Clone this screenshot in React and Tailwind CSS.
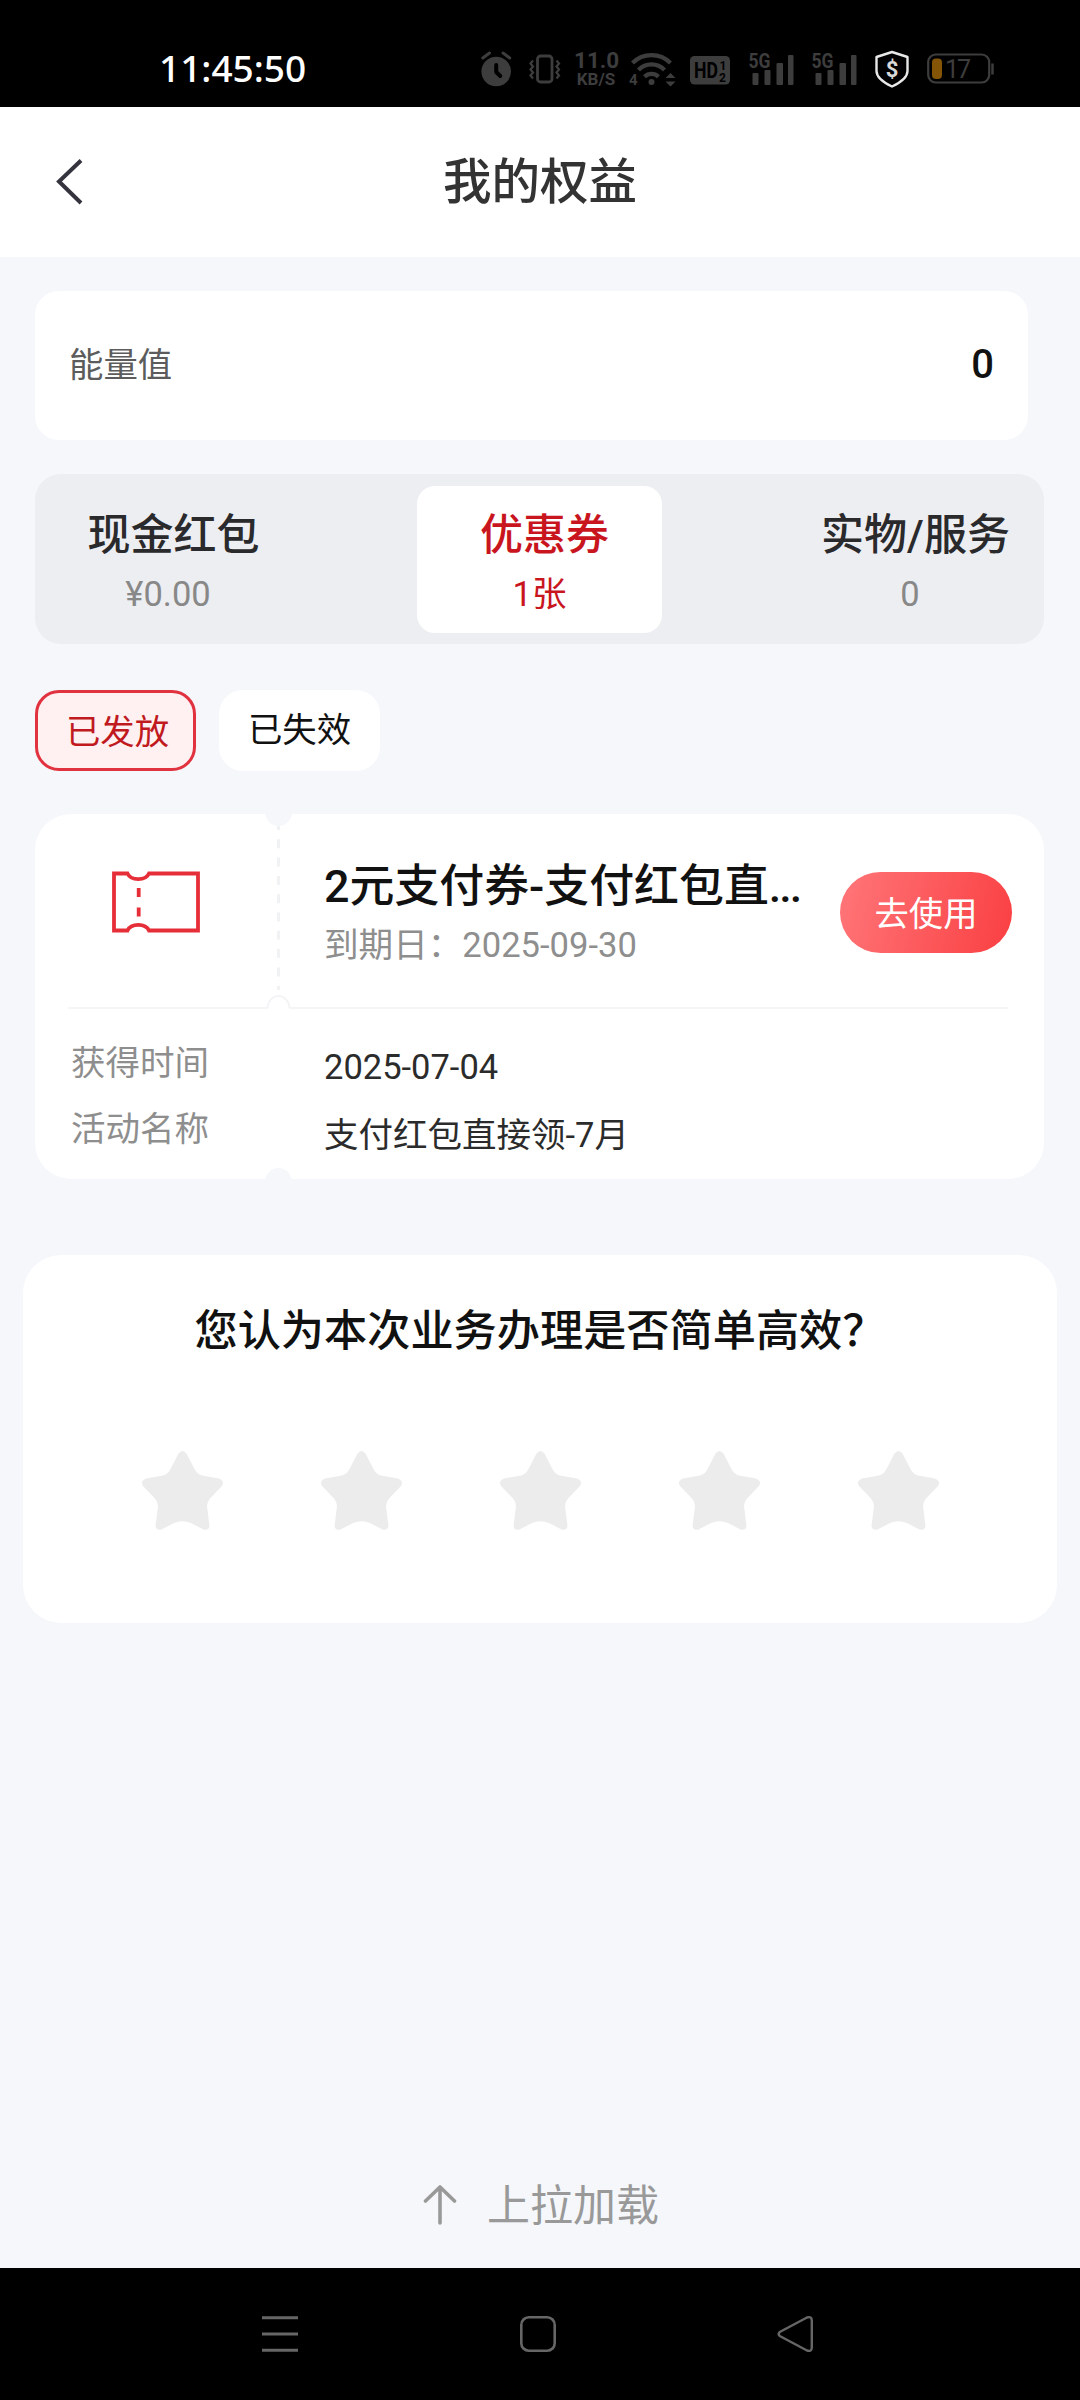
const DIM = "#3d3d3d";

function AlarmIcon() {
  return (
    <svg className="ml-[481px] h-[36px] w-[31px]" viewBox="0 0 31 36">
      <circle cx="15.2" cy="20.5" r="14.8" fill={DIM} />
      <path d="M1.8 7 8.500 2M28.700 7 22 2" stroke={DIM} strokeWidth="3" strokeLinecap="round" />
      <path d="M15.200 14v7l4 4" fill="none" stroke="#000" strokeWidth="4" strokeLinecap="round" strokeLinejoin="round" />
    </svg>
  );
}

function VibrateIcon() {
  return (
    <svg className="ml-[17px] h-[36px] w-[32px]" viewBox="0 0 32 36" fill="none" stroke={DIM} strokeWidth="2.800">
      <rect x="8.500" y="5" width="14.500" height="26" rx="3" />
      <path d="M4 9.500 1.500 12.500 4 15.500 1.500 18.500 4 21.500 1.500 24.500 4 27.500M27.500 9.500l2.500 3-2.500 3 2.500 3-2.500 3 2.500 3-2.500 3" strokeWidth="2.200" />
    </svg>
  );
}

function WifiIcon() {
  return (
    <svg className="ml-[11px] h-[36px] w-[48px] overflow-visible" viewBox="0 0 48 36" fill="none" stroke={DIM} strokeWidth="4.200">
      <path d="M3.500 12a27 27 0 0 1 38 0" />
      <path d="M9.500 19a18 18 0 0 1 26 0" />
      <path d="M15.500 25.700a10 10 0 0 1 14 0" />
      <circle cx="22.500" cy="31" r="3" fill={DIM} stroke="none" />
      <path d="M41.500 22l5 5h-10zM41.500 35.500l5-5h-10z" fill={DIM} stroke="none" />
      <text x="0" y="34" fontSize="15" fontWeight="700" fill={DIM} stroke="none">4</text>
    </svg>
  );
}

function HdIcon() {
  return (
    <svg className="ml-[13px] h-[36px] w-[40px] overflow-visible" viewBox="0 0 40 36">
      <rect y="5" width="40" height="28.500" rx="4.500" fill={DIM} />
      <g fill="#000" fontWeight="700">
        <text x="4" y="27" fontSize="22" textLength="24" lengthAdjust="spacingAndGlyphs">HD</text>
        <text x="29.500" y="18.500" fontSize="12">1</text>
        <text x="29" y="30.500" fontSize="12">2</text>
      </g>
    </svg>
  );
}

function SignalIcon() {
  return (
    <svg className="ml-[17px] h-[36px] w-[46px] overflow-visible" viewBox="0 0 46 36" fill={DIM}>
      <text x="1.500" y="17" fontSize="20" fontWeight="700" textLength="22" lengthAdjust="spacingAndGlyphs">5G</text>
      <rect x="5.500" y="22" width="6" height="12" rx="1" />
      <rect x="17.500" y="19" width="6" height="15" rx="1" />
      <rect x="29.500" y="12" width="6.500" height="22" rx="1" />
      <rect x="41" y="4" width="5.500" height="30" rx="1" />
    </svg>
  );
}

function ShieldIcon() {
  return (
    <svg className="ml-[19px] h-[38px] w-[34px]" viewBox="0 0 34 38" fill="none">
      <path d="M17 2 32.500 7v14c0 7-7 11.500-15.500 15.500C8.500 32.500 1.500 28 1.500 21V7z" stroke="#e8e8e8" strokeWidth="2.400" strokeLinejoin="round" />
      <text x="17" y="26.500" fontSize="22" fontWeight="700" textAnchor="middle" fill="#d8d8d8">$</text>
    </svg>
  );
}

function BatteryIcon() {
  return (
    <svg className="ml-[18px] h-[36px] w-[68px]" viewBox="0 0 68 36" fill="none">
      <rect x="1.200" y="3.500" width="61" height="28" rx="7.500" stroke="#3d3d3d" strokeWidth="2.200" />
      <rect x="5" y="7.500" width="10" height="20.500" rx="4" fill="#845407" />
      <path d="M65.500 12.500v11" stroke="#3d3d3d" strokeWidth="2.500" />
      <text x="18" y="26.500" fontSize="25" fill="#3d3d3d" textLength="26">17</text>
    </svg>
  );
}

function StatusBar() {
  return (
    <div className="relative flex h-[107px] items-center bg-black pt-[31px]">
      <span className="absolute left-[159px] top-[44px] font-['Noto_Sans','Roboto',sans-serif] text-[37px] font-medium leading-[48px] text-white">
        11:45:50
      </span>
      <AlarmIcon />
      <VibrateIcon />
      <div className="ml-[13px] w-[44px] text-center font-bold text-[#3d3d3d]">
        <div className="text-[22.500px] leading-[20px]">11.0</div>
        <div className="text-[17px] leading-[18px]">KB/S</div>
      </div>
      <WifiIcon />
      <HdIcon />
      <SignalIcon />
      <SignalIcon />
      <ShieldIcon />
      <BatteryIcon />
    </div>
  );
}

function Header() {
  return (
    <header className="grid h-[150px] grid-cols-[200px_1fr_200px] items-center bg-white">
      <svg className="ml-[54px] h-[48px] w-[32px]" viewBox="0 0 32 48" fill="none" stroke="#34343e" strokeWidth="4">
        <path d="M27 2.500 5 23.500 27 45" />
      </svg>
      <h1 className="pt-[2px] text-center text-[48.5px] font-medium leading-[60px] text-[#333]">我的权益</h1>
    </header>
  );
}

const tabs = [
  { label: "现金红包", value: "¥0.00" },
  { label: "优惠券", value: "1张", active: true },
  { label: "实物/服务", value: "0" },
];

function Tabs() {
  return (
    <nav className="mt-[34px] flex h-[170px] w-[1009px] rounded-[26px] bg-[#edeef2] pl-[11px] pt-[12px]">
      {tabs.map((t) => (
        <div
          key={t.label}
          className={
            t.active
              ? "ml-[116px] mr-[126px] flex h-[147px] w-[245px] flex-col items-center rounded-[18px] bg-white pl-[10px] pt-[19px] text-[#c9151e]"
              : "flex h-[147px] w-[255px] flex-col items-center pt-[19px] text-[#2a2a2c]"
          }
        >
          <span className="text-[43px] font-medium leading-[60px]">{t.label}</span>
          <span
            className={
              t.active
                ? "mr-[10px] text-[34.5px] leading-[58px]"
                : "mr-[11px] text-[34.5px] leading-[58px] text-[#888]"
            }
          >
            {t.value}
          </span>
        </div>
      ))}
    </nav>
  );
}

function TicketIcon() {
  return (
    <svg className="ml-[76px] mt-[57px] h-[62px] w-[89px]" viewBox="0 0 89 62" fill="none" stroke="#e62e38" strokeWidth="3.800">
      <path d="M3 2.500H16.500c3.500 7.500 18 7.500 21.500 0H87v57H38c-3.500-7.500-18-7.500-21.500 0H3z" />
      <path d="M27.700 17v9M27.700 36.500v9" />
    </svg>
  );
}

function Coupon() {
  return (
    <section className="relative mt-[43px] h-[365px] w-[1009px] overflow-hidden rounded-[36px] bg-white">
      <i className="absolute left-[230px] top-[-15px] h-[27px] w-[27px] rounded-full bg-[#f5f7fb]" />
      <i className="absolute bottom-[-16px] left-[230px] h-[27px] w-[27px] rounded-full bg-[#f5f7fb]" />
      <svg className="absolute left-[242px] top-[12px] h-[164px] w-[3px]" viewBox="0 0 3 164">
        <path d="M1.500 0V164" stroke="#f1f2f4" strokeWidth="3" strokeDasharray="9 9.300" strokeDashoffset="5" />
      </svg>
      <svg className="absolute left-[231px] top-[180px] h-[15px] w-[25px]" viewBox="0 0 25 15" fill="none" stroke="#f3f4f6" strokeWidth="1.800">
        <path d="M1.500 14.500a11 12.500 0 0 1 22 0" />
      </svg>
      <div className="flex h-[193px]">
        <div className="w-[208px]">
          <TicketIcon />
        </div>
        <div className="ml-[81px] w-[482px] pt-[43px]">
          <h2 className="whitespace-nowrap text-[44.9px] font-medium leading-[60px] text-[#111]">
            2元支付券-支付红包直<span className="tracking-[-2px]">...</span>
          </h2>
          <p className="text-[34.6px] leading-[57px] text-[#8e8e8e]">到期日：2025-09-30</p>
        </div>
        <button className="ml-[34px] mt-[58px] h-[81px] w-[172px] rounded-full bg-linear-[105deg,#ff7679,#fa3f42] pt-[4px] text-[34.3px] leading-[77px] text-white">
          去使用
        </button>
      </div>
      <div className="ml-[33px] flex h-[2px] w-[940px] justify-between">
        <i className="w-[200px] bg-[#f5f5f6]" />
        <i className="w-[718px] bg-[#f5f5f6]" />
      </div>
      <dl className="grid grid-cols-[253px_1fr] pl-[36px] text-[34.5px] leading-[66px]">
        <dt className="pt-[21px] text-[#8e8e8e]">获得时间</dt>
        <dd className="pt-[25px] text-[#2b2b2b]">2025-07-04</dd>
        <dt className="relative top-[-4px] text-[#8e8e8e]">活动名称</dt>
        <dd className="relative top-[2px] text-[#2b2b2b]">支付红包直接领-7月</dd>
      </dl>
    </section>
  );
}

function Star() {
  return (
    <svg className="h-[81px] w-[83px]" viewBox="0 0 83 81" fill="#ececec">
      <path d="M37.500 3.500Q41.500-1.500 45.500 3.500L53.500 19Q56 24 61 25.500L78 28.500Q84 31 81 36L69 48.500Q66 52 66 56L68.500 76Q67.500 81 62.500 79.500L50 73Q41.500 69.500 33 73L20.500 79.500Q15.500 81 14.500 76L17 56Q17 52 14 48.500L2 36Q-1 31 5 28.500L22 25.500Q27 24 29.500 19Z" />
    </svg>
  );
}

function Survey() {
  return (
    <section className="ml-[-12px] mt-[76px] h-[368px] w-[1034px] rounded-[38px] bg-white pt-[47px]">
      <h2 className="text-center text-[43.2px] font-medium leading-[60px] text-[#111]">您认为本次业务办理是否简单高效？</h2>
      <div className="mt-[88px] flex justify-between px-[117.5px]">
        {[1, 2, 3, 4, 5].map((n) => (
          <Star key={n} />
        ))}
      </div>
    </section>
  );
}

function NavBar() {
  return (
    <footer className="flex h-[132px] items-center bg-black">
      <svg className="ml-[262px] h-[36px] w-[36px]" viewBox="0 0 36 36" stroke="#666" strokeWidth="3">
        <path d="M0 1.800H36M0 18H36M0 34.300H36" />
      </svg>
      <svg className="ml-[221px] h-[38px] w-[38px]" viewBox="0 0 38 38" fill="none" stroke="#666" strokeWidth="2.600">
        <rect x="2.300" y="2.300" width="33.400" height="33.400" rx="7.500" />
      </svg>
      <svg className="ml-[220px] h-[38px] w-[38px]" viewBox="0 0 38 38" fill="none" stroke="#666" strokeWidth="2.400" strokeLinejoin="round">
        <path d="M3.200 16.800 30 2.500Q34.800 1 34.800 5.500V32.500Q34.800 37 30 35.500L3.200 21.200Q0 19 3.200 16.800Z" />
      </svg>
    </footer>
  );
}

export default function App() {
  return (
    <div className="flex h-[2400px] w-[1080px] flex-col overflow-hidden bg-[#f5f7fb] font-['Roboto','Noto_Sans_CJK_SC',sans-serif]">
      <StatusBar />
      <Header />
      <main className="flex flex-1 flex-col pl-[35px]">
        <section className="mt-[34px] flex h-[149px] w-[993px] items-center justify-between rounded-[24px] bg-white px-[34px]">
          <span className="text-[34.4px] text-[#5c5c5c]">能量值</span>
          <span className="pb-[2px] text-[40px] font-medium text-[#111]">0</span>
        </section>
        <Tabs />
        <div className="mt-[46px] flex gap-[23px] text-[34.4px]">
          <button className="h-[81px] w-[161px] rounded-[24px] border-[3px] border-[#e1323f] bg-[#fff0f1] pl-[4px] pt-[5px] text-[#c01920]">已发放</button>
          <button className="h-[81px] w-[161px] rounded-[24px] bg-white text-[#111]">已失效</button>
        </div>
        <Coupon />
        <Survey />
        <div className="mb-[31px] mt-auto flex items-center text-[#999]">
          <svg className="ml-[388px] h-[42px] w-[34px]" viewBox="0 0 34 42" fill="none" stroke="#999" strokeWidth="3.600" strokeLinecap="round" strokeLinejoin="round">
            <path d="M17 39V3M2.500 17 17 3 31.500 17" />
          </svg>
          <span className="ml-[30px] pt-[2px] text-[43px] leading-[62px]">上拉加载</span>
        </div>
      </main>
      <NavBar />
    </div>
  );
}
